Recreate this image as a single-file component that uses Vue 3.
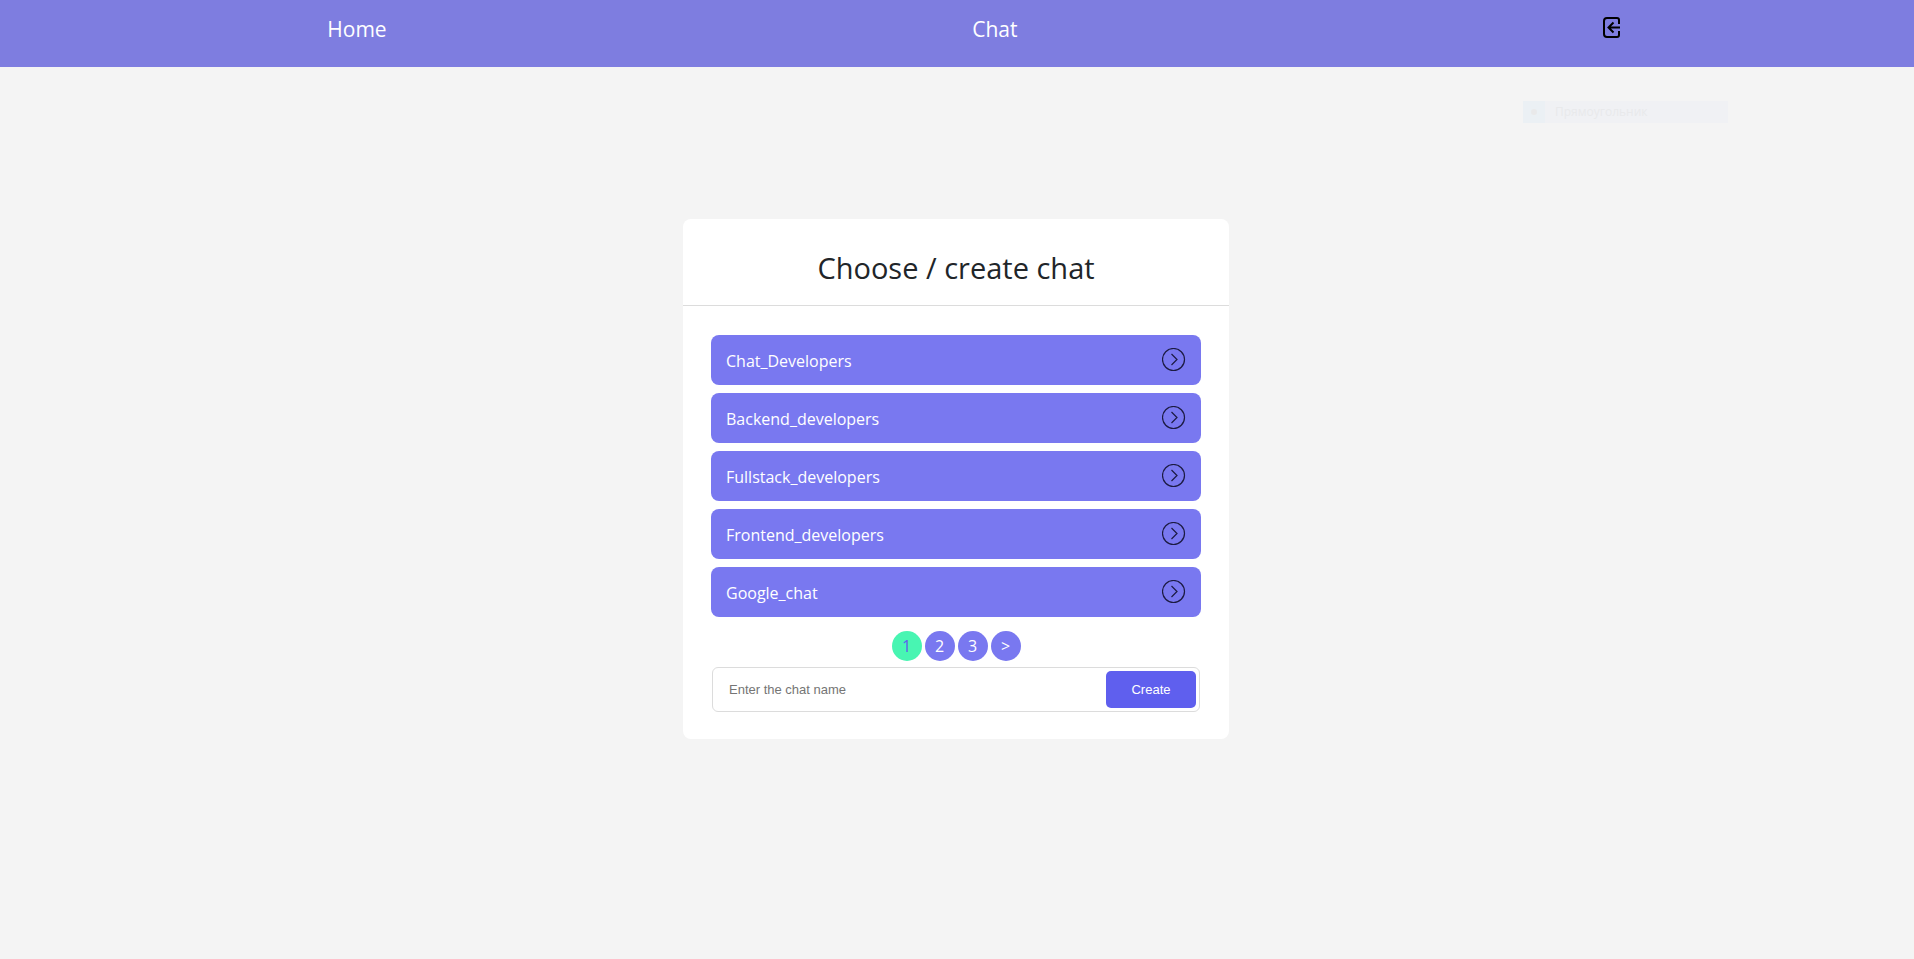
<script setup>
import { ref } from 'vue'

const chats = [
  'Chat_Developers',
  'Backend_developers',
  'Fullstack_developers',
  'Frontend_developers',
  'Google_chat',
]
const pages = ['1', '2', '3', '>']
const current = ref('1')
const chatName = ref('')
</script>

<template>
  <div class="page">
    <header class="header">
      <nav class="nav">
        <a class="nav-link" href="#home">Home</a>
        <a class="nav-link" href="#chat">Chat</a>
        <a class="logout" href="#logout" aria-label="Log out">
          <svg width="18" height="22" viewBox="0 0 18 22" fill="none" stroke="#000" stroke-width="2">
            <path d="M16 7V3a2 2 0 0 0-2-2H4a3 3 0 0 0-3 3v13a3 3 0 0 0 3 3h10a2 2 0 0 0 2-2v-4" />
            <path d="M17 10.500H6M10.500 5.500L5.500 10.500l5 5" />
          </svg>
        </a>
      </nav>
    </header>

    <div class="ghost" aria-hidden="true">
      <span class="ghost-icon"><span class="ghost-dot"></span></span>
      <span class="ghost-text">Прямоугольник</span>
    </div>

    <main class="main">
      <section class="card">
        <h1 class="title">Choose / create chat</h1>
        <div class="body">
          <ul class="chats">
            <li v-for="chat in chats" :key="chat">
              <a class="chat" :href="'#' + chat">
                <span class="chat-name">{{ chat }}</span>
                <svg width="24" height="24" viewBox="0 0 24 24" fill="none" stroke="#1c1b42" stroke-width="1.200">
                  <circle cx="11.500" cy="11.500" r="11" />
                  <path d="M9.500 6l5.500 5.500-5.500 5.500" />
                </svg>
              </a>
            </li>
          </ul>
          <div class="pages">
            <button
              v-for="page in pages"
              :key="page"
              type="button"
              class="page-button"
              :class="{ active: page === current }"
              @click="current = page"
            >{{ page }}</button>
          </div>
          <form class="create" @submit.prevent>
            <input v-model="chatName" class="name" type="text" aria-label="Chat name" placeholder="Enter the chat name" />
            <button class="submit" type="submit">Create</button>
          </form>
        </div>
      </section>
    </main>
  </div>
</template>

<style>
body {
  margin: 0;
  background: #f4f4f4;
}
</style>

<style scoped>
.page {
  position: relative;
  min-height: 100vh;
  display: flex;
  flex-direction: column;
  background: #f4f4f4;
  font-family: "Open Sans", "Noto Sans", sans-serif;
  font-size: 16px;
  line-height: 24px;
  color: #212529;
}

.page *,
.page {
  box-sizing: border-box;
}

.header {
  background: #7e7de0;
}

.nav {
  display: flex;
  justify-content: space-between;
  align-items: flex-start;
  padding: 14px 15.3% 23px 17.1%;
}

.nav-link {
  color: #fff;
  font-size: 21px;
  line-height: 30px;
  text-decoration: none;
}

.logout {
  display: block;
  padding: 3px 0;
}

.logout svg {
  display: block;
}

.ghost {
  position: absolute;
  top: 101px;
  right: 186px;
  display: flex;
  width: 205px;
  height: 22px;
  background: #f0f1f4;
}

.ghost-icon {
  display: flex;
  align-items: center;
  justify-content: center;
  width: 22px;
  background: #ebf0f4;
}

.ghost-dot {
  width: 6px;
  height: 6px;
  border-radius: 50%;
  background: #e9e9ea;
}

.ghost-text {
  padding-left: 10px;
  font-size: 12px;
  line-height: 22px;
  color: #e8e9eb;
}

.main {
  flex: 1;
  display: flex;
  justify-content: center;
  align-items: center;
  padding: 0 2px 68px 0;
}

.card {
  width: 546px;
  max-width: 100%;
  background: #fff;
  border-radius: 8px;
}

.title {
  margin: 0;
  padding: 31px 16px 19px;
  border-bottom: 1px solid #dcdcdc;
  font-size: 29px;
  line-height: 36px;
  font-weight: 400;
  text-align: center;
}

.body {
  padding: 29px 28px 27px;
}

.chats {
  display: flex;
  flex-direction: column;
  gap: 8px;
  margin: 0;
  padding: 0;
  list-style: none;
}

.chat {
  display: flex;
  align-items: center;
  justify-content: space-between;
  height: 50px;
  padding: 0 15px;
  border-radius: 8px;
  background: #7978f0;
  color: #fff;
  text-decoration: none;
}

.chat-name {
  padding-top: 2px;
}

.pages {
  display: flex;
  justify-content: center;
  gap: 3px;
  padding: 14px 0 6px;
}

.page-button {
  width: 30px;
  height: 30px;
  padding: 0;
  border: 0;
  border-radius: 50%;
  background: #7978f0;
  color: #fff;
  font: inherit;
}

.page-button.active {
  background: #48f5b2;
  color: #5f5fee;
}

.create {
  display: flex;
  margin: 0 1px;
  padding: 3px;
  border: 1px solid #dcdcdc;
  border-radius: 6px;
}

.name {
  flex: 1;
  min-width: 0;
  padding: 0 13px;
  border: 0;
  outline: 0;
  background: transparent;
  font-family: "Liberation Sans", Arial, sans-serif;
  font-size: 13px;
}

.name::placeholder {
  color: #757575;
}

.submit {
  width: 90px;
  height: 37px;
  border: 0;
  border-radius: 5px;
  background: #5f5fee;
  color: #fff;
  font-family: "Liberation Sans", Arial, sans-serif;
  font-size: 13px;
}
</style>
